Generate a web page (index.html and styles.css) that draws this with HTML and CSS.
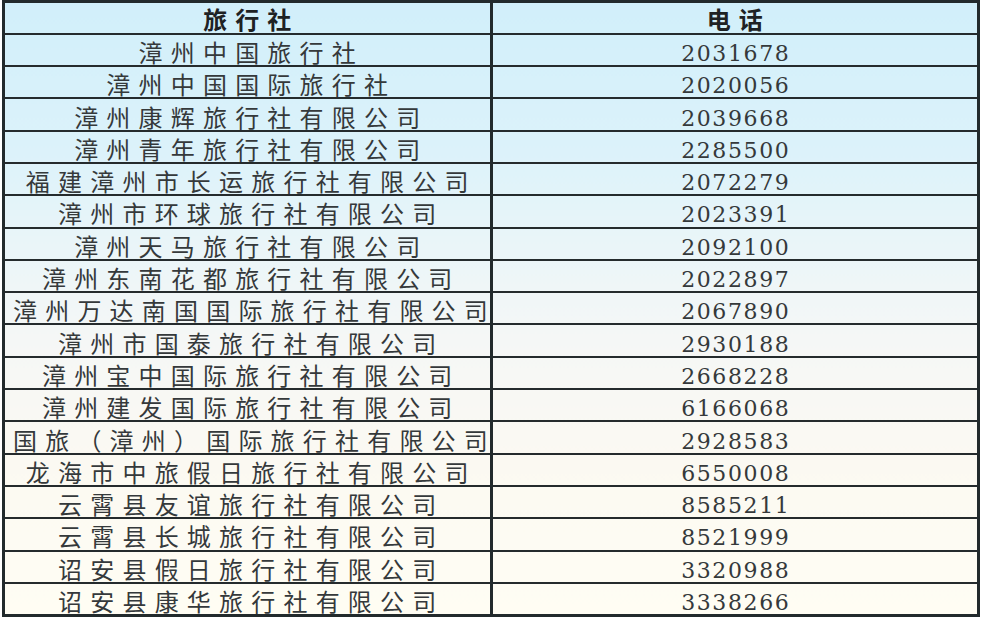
FILE: index.html
```html
<!DOCTYPE html>
<html lang="zh-CN">
<head>
<meta charset="utf-8">
<title>漳州旅行社电话</title>
<link rel="stylesheet" href="styles.css">
</head>
<body>
<table class="agency-table">
  <thead>
    <tr><th class="col-name">旅行社</th><th class="col-phone">电话</th></tr>
  </thead>
  <tbody>
    <tr><td class="name">漳州中国旅行社</td><td class="phone">2031678</td></tr>
    <tr><td class="name">漳州中国国际旅行社</td><td class="phone">2020056</td></tr>
    <tr><td class="name">漳州康辉旅行社有限公司</td><td class="phone">2039668</td></tr>
    <tr><td class="name">漳州青年旅行社有限公司</td><td class="phone">2285500</td></tr>
    <tr><td class="name">福建漳州市长运旅行社有限公司</td><td class="phone">2072279</td></tr>
    <tr><td class="name">漳州市环球旅行社有限公司</td><td class="phone">2023391</td></tr>
    <tr><td class="name">漳州天马旅行社有限公司</td><td class="phone">2092100</td></tr>
    <tr><td class="name">漳州东南花都旅行社有限公司</td><td class="phone">2022897</td></tr>
    <tr><td class="name">漳州万达南国国际旅行社有限公司</td><td class="phone">2067890</td></tr>
    <tr><td class="name">漳州市国泰旅行社有限公司</td><td class="phone">2930188</td></tr>
    <tr><td class="name">漳州宝中国际旅行社有限公司</td><td class="phone">2668228</td></tr>
    <tr><td class="name">漳州建发国际旅行社有限公司</td><td class="phone">6166068</td></tr>
    <tr><td class="name">国旅（漳州）国际旅行社有限公司</td><td class="phone">2928583</td></tr>
    <tr><td class="name">龙海市中旅假日旅行社有限公司</td><td class="phone">6550008</td></tr>
    <tr><td class="name">云霄县友谊旅行社有限公司</td><td class="phone">8585211</td></tr>
    <tr><td class="name">云霄县长城旅行社有限公司</td><td class="phone">8521999</td></tr>
    <tr><td class="name">诏安县假日旅行社有限公司</td><td class="phone">3320988</td></tr>
    <tr><td class="name">诏安县康华旅行社有限公司</td><td class="phone">3338266</td></tr>
  </tbody>
</table>
</body>
</html>
```
FILE: styles.css
```css
html, body {
  margin: 0;
  padding: 0;
  background: #ffffff;
}

body {
  padding-left: 2px;
  font-family: "Noto Sans CJK SC", "Liberation Serif", sans-serif;
}

.agency-table {
  width: 978px;
  border-collapse: collapse;
  table-layout: fixed;
  border: 3px solid #222a2c;
  background: linear-gradient(to bottom, #d1effa 0%, #dcf2fa 25%, #eaf5f8 40%, #f5f7f6 55%, #fbf9f2 75%, #fffdf3 100%);
}

.agency-table tr {
  height: 32.3px;
}

.agency-table th,
.agency-table td {
  border-top: 2px solid #252b2d;
  border-bottom: 2px solid #252b2d;
  padding: 4px 0 0 0;
  text-align: center;
  vertical-align: middle;
  line-height: 24px;
  white-space: nowrap;
}

.agency-table th:first-child,
.agency-table td:first-child {
  border-right: 3px solid #222a2c;
}

.agency-table th {
  font-family: "Noto Sans CJK SC", sans-serif;
  font-weight: 700;
  font-size: 24px;
  color: #1e2224;
  letter-spacing: 8px;
  padding-top: 3px;
  padding-left: 8px;
}

.name {
  font-size: 24px;
  color: #35393b;
  letter-spacing: 8.2px;
  padding-left: 8px !important;
}

.phone {
  font-family: "DejaVu Serif", "Liberation Serif", serif;
  font-size: 22px;
  line-height: 20px !important;
  color: #35393b;
  letter-spacing: 1.6px;
  padding-top: 8px !important;
  padding-left: 2px !important;
}
```
